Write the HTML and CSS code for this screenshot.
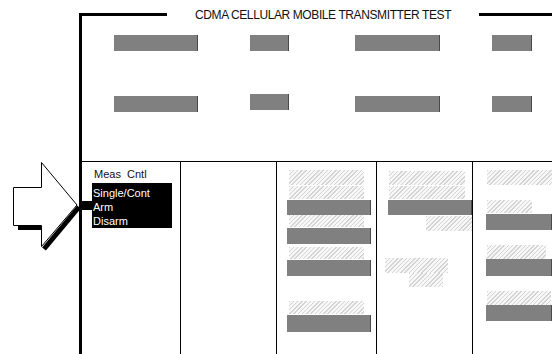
FILE: index.html
```html
<!DOCTYPE html>
<html lang="en">
<head>
  <meta charset="UTF-8" />
  <title>CDMA Cellular Mobile Transmitter Test</title>
  <link rel="stylesheet" href="styles.css">
</head>
<body>
  <div class="screen">
    <!-- pointer arrow to the Meas Cntl menu -->
    <svg class="pointer" width="95" height="100" viewBox="0 155 95 100">
      <rect x="79" y="201" width="14" height="9" fill="#000" />
      <line x1="18" y1="227.5" x2="41" y2="227.5" stroke="#000" stroke-width="5" />
      <line x1="79" y1="207" x2="44" y2="249" stroke="#000" stroke-width="5" />
      <polygon points="13.5,187.5 41.5,187.5 41.5,162.5 77,205 41.5,246.5 41.5,225.5 13.5,225.5"
               fill="#fff" stroke="#000" stroke-width="1" />
    </svg>

    <div class="frame">
      <div class="title-row">
        <span class="rule rule-left"></span>
        <span class="title">CDMA CELLULAR MOBILE TRANSMITTER TEST</span>
        <span class="rule rule-right"></span>
      </div>

      <div class="readout">
        <div class="bar w84"></div>
        <div class="bar w39"></div>
        <div class="bar w85"></div>
        <div class="bar w40"></div>
        <div class="bar w84"></div>
        <div class="bar w39 raised"></div>
        <div class="bar w85"></div>
        <div class="bar w40"></div>
      </div>

      <div class="panel">
        <div class="col c1">
          <div class="label">Meas  Cntl</div>
          <div class="menu">
            <div>Single/Cont</div>
            <div>Arm</div>
            <div>Disarm</div>
          </div>
        </div>
        <div class="col c2"></div>
        <div class="col c3">
          <div class="hatch"></div>
          <div class="hatch"></div>
          <div class="bar"></div>
          <div class="hatch"></div>
          <div class="bar"></div>
          <div class="hatch"></div>
          <div class="bar"></div>
          <div class="hatch"></div>
          <div class="bar"></div>
        </div>
        <div class="col c4">
          <div class="hatch"></div>
          <div class="hatch"></div>
          <div class="bar"></div>
          <div class="hatch"></div>
          <div class="hatch"></div>
          <div class="hatch"></div>
        </div>
        <div class="col c5">
          <div class="hatch"></div>
          <div class="hatch"></div>
          <div class="bar"></div>
          <div class="hatch"></div>
          <div class="bar"></div>
          <div class="hatch"></div>
          <div class="bar"></div>
        </div>
      </div>
    </div>
  </div>
</body>
</html>
```

FILE: styles.css
```css
body {
  margin: 0;
  background: #fff;
  color: #000;
  font-family: "Liberation Sans", Arial, sans-serif;
  overflow: hidden;
}
.screen {
  position: relative;
  width: 552px;
  height: 354px;
  overflow: hidden;
}
.pointer {
  position: absolute;
  left: 0;
  top: 155px;
  z-index: 2;
}
/* main frame, thick rule on the left */
.frame {
  margin: 13px 0 0 79px;
  height: 341px;
  border-left: 3px solid #000;
  display: flex;
  flex-direction: column;
}
.title-row {
  height: 3px;
  display: flex;
  align-items: center;
}
.rule {
  height: 3px;
  background: #000;
}
.rule-left {
  width: 85px;
}
.rule-right {
  flex: 1;
  margin-left: 28px;
}
.title {
  margin-left: 28px;
  font-size: 12px;
  letter-spacing: -0.4px;
  line-height: 14px;
  white-space: nowrap;
  color: #111;
}
/* grey value fields */
.bar {
  background: #808080;
  border-right: 1px solid #4a4a4a;
  box-sizing: border-box;
}
.hatch {
  background: repeating-linear-gradient(135deg, #d4d4d4 0 1px, #f7f7f7 1px 3px);
}
.readout {
  height: 145px;
  box-sizing: border-box;
  padding: 19px 0 0 32px;
  display: grid;
  grid-template-columns: 136px 105px 137px 40px;
  grid-template-rows: 16px 16px;
  row-gap: 45px;
  align-items: start;
}
.readout .bar {
  height: 16px;
}
.w84 { width: 84px; }
.w39 { width: 39px; }
.w85 { width: 85px; }
.w40 { width: 40px; }
.raised { margin-top: -2px; }

/* lower panel */
.panel {
  flex: 1;
  border-top: 1px solid #000;
  display: grid;
  grid-template-columns: 98px 96px 100px 96px 1fr;
}
.col {
  display: flex;
  flex-direction: column;
  align-items: flex-start;
}
.col + .col {
  border-left: 1px solid #000;
}
.c1 {
  padding: 5px 0 0 10px;
  font-size: 11px;
  line-height: 14px;
}
.label {
  padding-left: 2px;
  white-space: pre;
  color: #111;
}
.menu {
  margin-top: 2px;
  width: 80px;
  padding: 3px 0 0 1px;
  box-sizing: border-box;
  background: #000;
  color: #fff;
}

.c3 .hatch { margin-left: 12px; width: 75px; }
.c3 .bar { margin-left: 10px; width: 84px; }
.c3 > :nth-child(1) { margin-top: 8px; height: 15px; }
.c3 > :nth-child(2) { margin-top: 1px; height: 13px; }
.c3 > :nth-child(3) { margin-top: 1px; height: 15px; }
.c3 > :nth-child(4) { height: 12px; }
.c3 > :nth-child(5) { margin-top: 1px; height: 16px; }
.c3 > :nth-child(6) { margin-top: 3px; height: 12px; }
.c3 > :nth-child(7) { margin-top: 1px; height: 16px; }
.c3 > :nth-child(8) { margin-top: 25px; height: 13px; }
.c3 > :nth-child(9) { margin-top: 1px; height: 17px; }

.c4 > :nth-child(1) { margin: 9px 0 0 12px; width: 76px; height: 14px; }
.c4 > :nth-child(2) { margin: 1px 0 0 12px; width: 76px; height: 13px; }
.c4 > :nth-child(3) { margin: 1px 0 0 11px; width: 84px; height: 15px; }
.c4 > :nth-child(4) { margin: 1px 0 0 49px; width: 46px; height: 15px; }
.c4 > :nth-child(5) { margin: 27px 0 0 8px; width: 63px; height: 15px; }
.c4 > :nth-child(6) { margin: 0 0 0 32px; width: 34px; height: 14px; }

.c5 .hatch { margin-left: 14px; }
.c5 .bar { margin-left: 13px; align-self: stretch; }
.c5 > :nth-child(1) { margin-top: 8px; width: 65px; height: 15px; }
.c5 > :nth-child(2) { margin-top: 15px; width: 45px; height: 13px; }
.c5 > :nth-child(3) { margin-top: 1px; height: 16px; }
.c5 > :nth-child(4) { margin-top: 15px; width: 59px; height: 14px; }
.c5 > :nth-child(5) { height: 17px; }
.c5 > :nth-child(6) { margin-top: 15px; width: 64px; height: 14px; }
.c5 > :nth-child(7) { height: 16px; }
```
